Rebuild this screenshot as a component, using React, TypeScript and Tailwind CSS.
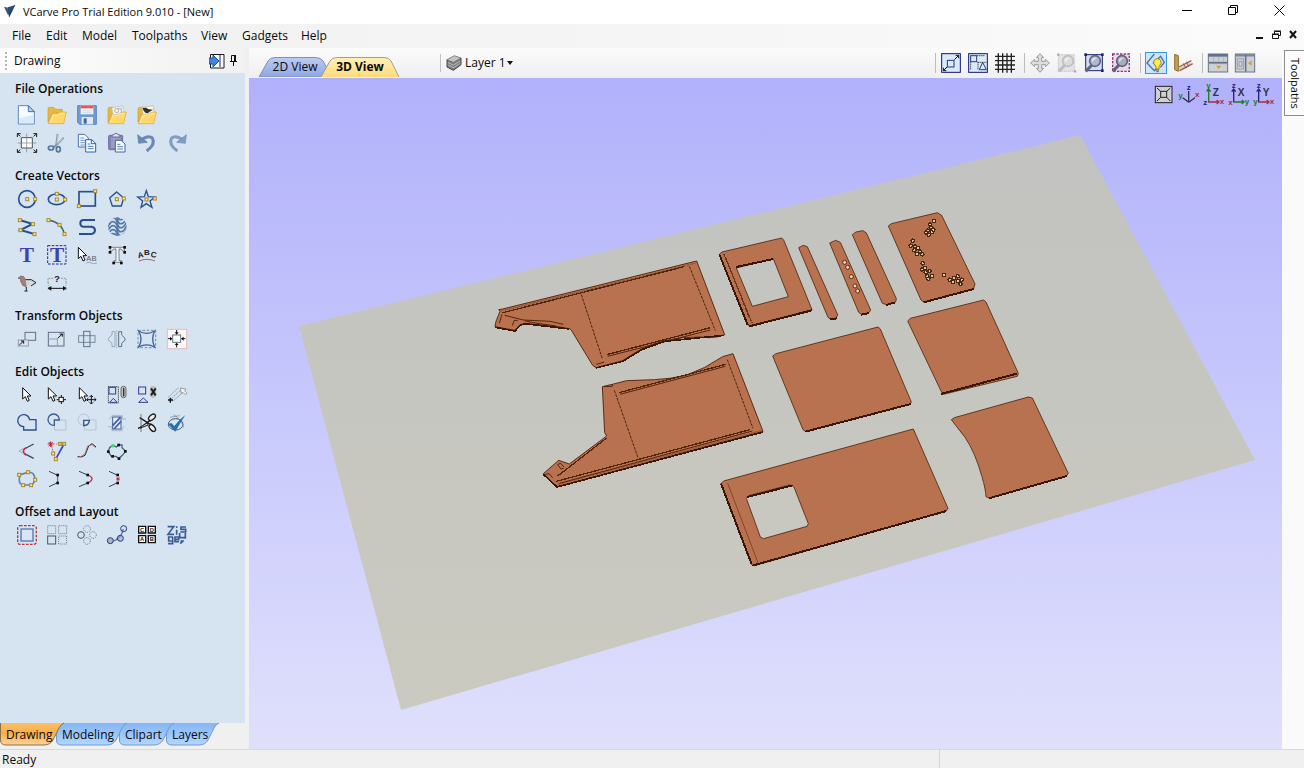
import React from "react";

type IconProps = { children: React.ReactNode; className?: string };

/* Tool glyphs are drawn on a 60-unit grid, three units to a pixel. */
function Glyph({ children, className = "size-5" }: IconProps) {
  return (
    <svg viewBox="0 0 60 60" className={className + " shrink-0 overflow-visible"} fill="none" strokeWidth="3" aria-hidden="true">
      {children}
    </svg>
  );
}

function Node({ x, y, fill = "#ffe88a" }: { x: number; y: number; fill?: string }) {
  return <rect x={x - 4} y={y - 4} width="9" height="9" fill={fill} stroke="#a8882c" strokeWidth="3" />;
}

function Dots({ points, size = 6, fill = "#111" }: { points: number[][]; size?: number; fill?: string }) {
  return (
    <>
      {points.map(([x, y]) => (
        <rect key={x + "-" + y} x={x - size / 2} y={y - size / 2} width={size} height={size} fill={fill} />
      ))}
    </>
  );
}

const navy = "#2a4f8f";
const slate = "#5d7088";
const cursor = "M0 0V34L8 27L14 41L20 38L14 25H25Z";

const folder = (
  <>
    <path d="M3 12Q3 7 8 7H20L26 13H46V24H16L3 52Z" fill="#e9b93f" stroke="#cf9a2b" strokeWidth="2" />
    <path d="M4 56L16 26H32L38 21H58L50 56Z" fill="#ffd869" stroke="#dba637" strokeWidth="2" />
    <path d="M10 52L18 31H34L40 26H52" stroke="#ffecab" strokeWidth="3" />
  </>
);

const icons: Record<string, React.ReactNode> = {
  new: (
    <>
      <path d="M4 2H34L52 20V57H4Z" fill="#f7fbff" stroke="#5b8bc0" />
      <path d="M7 40L49 30V55H7Z" fill="#d8eafa" />
      <path d="M34 2V20H52Z" fill="#b7d2ee" stroke="#3f74b0" />
    </>
  ),
  open: folder,
  save: (
    <>
      <path d="M2 2H58V58H8L2 52Z" fill="#6f9bd0" stroke="#5a86bd" />
      <rect x="11" y="2" width="38" height="26" fill="#eef1f6" />
      <rect x="11" y="2" width="38" height="8" fill="#e8585c" />
      <rect x="14" y="36" width="34" height="22" fill="#dfe8f3" />
      <rect x="20" y="40" width="9" height="16" fill="#3f69a0" />
      <path d="M16 17H44M16 23H44" stroke="#c9d1dc" strokeWidth="2" />
    </>
  ),
  openVector: (
    <>
      {folder}
      <path d="M14 8L47 3L51 20L38 24L32 29H18Z" fill="#f4f4ef" stroke="#b9b9a5" strokeWidth="2" />
      <circle cx="29" cy="17" r="6" stroke="#8b9199" strokeWidth="2" />
      <path d="M31 11H43V22" stroke="#8b9199" strokeWidth="2" />
    </>
  ),
  openBird: (
    <>
      {folder}
      <path d="M14 7L49 2L52 20L38 24L32 29H18Z" fill="#f4f4ef" stroke="#c5b36b" strokeWidth="2" />
      <path d="M16 9L27 8L35 13L48 14L38 20L32 25L26 24L20 17Z" fill="#30322e" />
      <path d="M18 31L9 52" stroke="#fff1bb" />
    </>
  ),
  jobSetup: (
    <>
      <rect x="13" y="14" width="33" height="31" fill="#fff" />
      <path d="M13 14H46V45H13Z" stroke="#4b5157" />
      <path d="M29 2V58M2 30H58" stroke="#777d84" strokeWidth="2" />
      <path d="M1 12V2H11M1 2L10 10M49 2H59V12M59 2L50 10M1 48V58H11M1 58L10 50M49 58H59V48M59 58L50 50" stroke="#181818" />
    </>
  ),
  cut: (
    <>
      <path d="M32 3L28 34L24 42M50 14L31 34L17 44" stroke="#8d97a3" strokeWidth="6" />
      <path d="M33 5L30 32M48 16L32 32" stroke="#e4e9ee" strokeWidth="2" />
      <ellipse cx="12" cy="45" rx="8" ry="6" stroke="#5374a6" strokeWidth="5" />
      <ellipse cx="34" cy="49" rx="6" ry="8" stroke="#5374a6" strokeWidth="5" />
    </>
  ),
  copy: (
    <>
      <path d="M4 4H23L34 15V42H4Z" fill="#f7fbff" stroke="#466fa9" />
      <path d="M10 15H22M10 22H28M10 29H28M10 36H24" stroke="#6c98cf" />
      <path d="M26 20H44L56 31V57H26Z" fill="#f7fbff" stroke="#34629f" />
      <path d="M43 20V32H56" stroke="#34629f" />
      <path d="M32 33H40M32 40H50M32 47H50" stroke="#4d82c4" />
    </>
  ),
  paste: (
    <>
      <rect x="5" y="7" width="42" height="43" rx="3" fill="#8383b6" stroke="#6c6ca4" />
      <rect x="12" y="12" width="28" height="33" fill="#9b9bc9" />
      <path d="M15 12V6H20Q22 1 27 1T34 6H39V12Z" fill="#e4e2ee" stroke="#6a6a94" />
      <path d="M25 22H42L54 33V57H25Z" fill="#f5faff" stroke="#44699e" />
      <path d="M31 34H40M31 41H48M31 48H48" stroke="#5682b8" />
    </>
  ),
  undo: (
    <>
      <path d="M14 20Q34 5 46 15Q57 34 29 54" stroke="#6c88b6" strokeWidth="9" />
      <path d="M2 5L5 31L31 28Z" fill="#6c88b6" stroke="#5f7ba6" strokeWidth="2" />
    </>
  ),
  redo: (
    <g transform="translate(60 0) scale(-1 1)">
      <path d="M14 20Q34 5 46 15Q57 34 29 54" stroke="#819bc1" strokeWidth="9" />
      <path d="M2 5L5 31L31 28Z" fill="#819bc1" stroke="#6f8ab2" strokeWidth="2" />
    </g>
  ),
  circle: (
    <>
      <circle cx="30" cy="30" r="25" stroke={navy} strokeWidth="5" />
      <Node x={30} y={30} /><Node x={54} y={30} />
    </>
  ),
  ellipse: (
    <>
      <ellipse cx="29" cy="31" rx="25" ry="16" stroke={navy} strokeWidth="5" />
      <Node x={29} y={14} /><Node x={29} y={31} /><Node x={54} y={31} />
    </>
  ),
  rectangle: (
    <>
      <rect x="6" y="8" width="49" height="43" stroke={navy} strokeWidth="5" />
      <Node x={54} y={6} /><Node x={5} y={51} />
    </>
  ),
  polygon: (
    <>
      <path d="M29 9L50 27L43 51H16L8 27Z" stroke={navy} strokeWidth="4" />
      <Node x={29} y={30} /><Node x={50} y={28} />
    </>
  ),
  star: (
    <>
      <path d="M28 5L34 23L54 24L39 36L45 55L28 44L12 55L17 36L2 24L22 23Z" stroke={navy} strokeWidth="4" />
      <Node x={28} y={31} /><Node x={53} y={28} />
    </>
  ),
  polyline: (
    <>
      <path d="M8 9L47 21L10 39L52 51" stroke={navy} strokeWidth="6" />
      <Node x={8} y={9} /><Node x={47} y={21} /><Node x={10} y={39} /><Node x={52} y={51} />
    </>
  ),
  arc: (
    <>
      <path d="M4 9Q45 16 52 51" stroke="#49627d" strokeWidth="4" />
      <Node x={4} y={9} /><Node x={37} y={23} /><Node x={52} y={51} />
    </>
  ),
  curve: <path d="M54 9H18Q10 10 10 19T18 29H44Q54 31 54 40T44 51H6" stroke={navy} strokeWidth="6" />,
  texture: (
    <>
      <clipPath id="texture-disc"><circle cx="31" cy="29" r="28" /></clipPath>
      <g clipPath="url(#texture-disc)" stroke="#5478a6" strokeWidth="5">
        {[-36, -24, -12, 0, 12, 24, 36].map((dy) => (
          <path key={dy} transform={`translate(0 ${dy})`} d="M-4 44Q8 14 18 14T31 30T44 44T66 12" />
        ))}
      </g>
    </>
  ),
  text: <text x="8" y="50" fontFamily="Liberation Serif, serif" fontWeight="700" fontSize="64" fill="#3c43a5">T</text>,
  textBox: (
    <>
      <rect x="2" y="2" width="55" height="55" stroke="#22268c" strokeDasharray="8 4" />
      <text x="9" y="50" fontFamily="Liberation Serif, serif" fontWeight="700" fontSize="64" fill="#3c43a5">T</text>
    </>
  ),
  textSelect: (
    <>
      <path d={cursor} transform="translate(4 7)" fill="#fff" stroke="#111" />
      <text x="28" y="49" fontFamily="Liberation Sans, sans-serif" fontSize="23" fill="#4e5d70">AB</text>
      <path d="M28 54Q38 50 43 54T60 54" stroke="#6b86a9" strokeWidth="2" />
    </>
  ),
  textEdit: (
    <>
      <path d="M10 7H52V18H47L43 12H36V47H43V52H21V47H27V12H19L15 18H10Z" fill="#f4f7fa" stroke="#4a4f55" strokeWidth="2" />
      <Dots points={[[9, 7], [53, 7], [9, 22], [53, 22], [20, 54], [43, 54]]} size={8} />
    </>
  ),
  textCurve: (
    <>
      <g fontFamily="Liberation Sans, sans-serif" fontWeight="700" fontSize="24" fill="#222">
        <text x="2" y="39" transform="rotate(-12 8 30)">A</text>
        <text x="21" y="30">B</text>
        <text x="41" y="37" transform="rotate(12 48 30)">C</text>
      </g>
      <path d="M6 48Q30 38 54 48" stroke="#a06a78" />
    </>
  ),
  bird: (
    <>
      <path d="M3 16L11 9L20 11L27 22L39 29L26 41L17 37L11 25V17Z" fill="#a97e77" stroke="#65514f" strokeWidth="2" />
      <path d="M26 20L43 20L57 29L42 39L29 41Z" fill="#d4d7db" />
      <path d="M26 20L43 20L57 29L42 39M28 42V54M22 54H32" stroke="#222" />
    </>
  ),
  dimension: (
    <>
      <path d="M3 30V16H18M42 16H57V30" stroke="#898f96" strokeDasharray="5 3" />
      <text x="21" y="27" fontFamily="Liberation Sans, sans-serif" fontWeight="700" fontSize="29" fill="#222">?</text>
      <path d="M4 30V54M57 30V54" stroke="#9ba1a8" strokeDasharray="3 3" />
      <path d="M5 46H56" stroke="#111" />
      <path d="M2 46L13 39V53ZM59 46L48 39V53Z" fill="#111" />
    </>
  ),
  move: (
    <>
      <rect x="24" y="10" width="32" height="24" stroke={slate} />
      <rect x="4" y="33" width="30" height="18" fill="#dce5ef" stroke="#8d9bac" />
      <path d="M7 48L20 36M12 36H20V44" stroke="#161616" />
    </>
  ),
  scale: (
    <>
      <rect x="4" y="10" width="47" height="41" stroke={slate} />
      <path d="M4 30H31V51" stroke="#91a0b2" />
      <path d="M32 28L46 15M38 15H46V23" stroke="#161616" />
    </>
  ),
  rotate: (
    <>
      <rect x="5" y="20" width="49" height="20" stroke="#7a8a9f" />
      <rect x="20" y="7" width="19" height="46" stroke={slate} />
    </>
  ),
  mirror: (
    <>
      <path d="M24 8V53H15V43L4 34V28L15 18V8Z" stroke="#9aa9bb" />
      <path d="M35 8V53H44V43L54 34V28L44 18V8Z" stroke={slate} />
      <path d="M29 4V57" stroke="#8193a8" strokeWidth="2" strokeDasharray="4 3" />
    </>
  ),
  distort: (
    <>
      <path d="M3 4H56V56H3Z" stroke="#4b6078" strokeDasharray="8 5" strokeWidth="2" />
      <path d="M5 6Q29 20 53 6Q41 30 53 54Q29 41 5 54Q19 30 5 6Z" stroke="#3c639c" strokeWidth="4" />
    </>
  ),
  align: (
    <>
      <rect x="1" y="1" width="58" height="58" fill="#fff7f7" stroke="#dfbcc0" />
      <rect x="17" y="18" width="24" height="22" fill="#fff" stroke="#5b7a79" />
      <path d="M29 3V14M29 55V44M3 29H14M55 29H44" stroke="#111" />
      <path d="M29 17L23 10H35ZM29 41L23 48H35ZM16 29L9 23V35ZM42 29L50 23V35Z" fill="#111" />
    </>
  ),
  select: <path d={cursor} transform="translate(17 8)" fill="#fff" stroke="#111" />,
  nodeEdit: (
    <>
      <path d={cursor} transform="translate(4 8)" fill="#fff" stroke="#111" />
      <rect x="36" y="37" width="13" height="13" fill="#fff" stroke="#111" />
      <path d="M43 30V36M43 51V57M29 44H35M50 44H57" stroke="#111" />
    </>
  ),
  transformEdit: (
    <>
      <path d={cursor} transform="translate(7 8)" fill="#fff" stroke="#111" />
      <path d="M43 31V57M29 44H57M38 36L43 31L48 36M38 52L43 57L48 52M34 39L29 44L34 49M52 39L57 44L52 49" stroke="#111" strokeWidth="3" />
    </>
  ),
  group: (
    <>
      <path d="M4 5H34V54H4Z" stroke="#222" strokeDasharray="3 3" />
      <rect x="6" y="7" width="20" height="20" stroke="#31379c" />
      <path d="M8 52L19 40L30 52Z" fill="#dfe5f2" stroke="#31379c" />
      <rect x="42" y="4" width="15" height="34" rx="7" fill="#bfc0bd" stroke="#6c6c69" />
      <rect x="48" y="9" width="4" height="25" fill="#333" />
    </>
  ),
  ungroup: (
    <>
      <rect x="5" y="6" width="21" height="21" stroke="#31379c" />
      <path d="M5 52L19 39L33 52Z" fill="#dfe5f2" stroke="#31379c" />
      <rect x="39" y="3" width="19" height="35" rx="7" fill="#c1c1bd" />
      <path d="M42 10L56 31M56 10L42 31" stroke="#222" strokeWidth="6" />
    </>
  ),
  measure: (
    <>
      <path d="M3 38L34 8M17 49L48 22" stroke="#8595a8" strokeWidth="2" />
      <path d="M11 43L43 13" stroke="#35569b" strokeWidth="2" strokeDasharray="4 3" />
      <path d="M3 45H18M10 38V53" stroke="#111" strokeWidth="4" />
      <path d="M40 9L57 12L53 17L60 25L55 29L48 22L43 26Z" fill="#f2f2ef" stroke="#777" strokeWidth="2" />
    </>
  ),
  weld: <path d="M38 20H57V51H20V41A18 18 0 1 1 38 20Z" stroke={navy} strokeWidth="4" />,
  subtract: (
    <>
      <path d="M37 21H57V51H22V37" stroke="#b3c0ce" />
      <path d="M37 21H22V37A17 17 0 1 1 37 21Z" stroke="#3b5d8c" strokeWidth="4" />
    </>
  ),
  intersect: (
    <>
      <path d="M37 21A17 17 0 1 0 22 37V51H57V21Z" stroke="#b8c5d2" />
      <path d="M20 22H37Q36 37 20 38Z" stroke="#355785" strokeWidth="4" />
    </>
  ),
  trim: (
    <>
      <path d="M6 18L15 10V7H39M51 40L45 48V53H22M3 41H15V53H21M40 8H46V18H57" stroke="#a9b6c4" />
      <rect x="17" y="12" width="25" height="36" fill="#e7eef7" stroke="#3f5fa0" />
      <path d="M17 38L40 13M21 48L42 25" stroke="#3f5fa0" strokeWidth="5" />
    </>
  ),
  scissors: (
    <>
      <path d="M8 14L36 32L44 34M10 46L34 26L44 20" stroke="#1a1a1a" strokeWidth="4" />
      <path d="M12 3V57" stroke="#444" strokeWidth="2" />
      <ellipse cx="45" cy="13" rx="12" ry="7" transform="rotate(-42 45 13)" fill="#eee" stroke="#1a1a1a" strokeWidth="4" />
      <ellipse cx="46" cy="45" rx="12" ry="7" transform="rotate(50 46 45)" fill="#eee" stroke="#1a1a1a" strokeWidth="4" />
      <path d="M3 46L30 30L34 36L12 44Z" fill="#ddd" stroke="#1a1a1a" />
    </>
  ),
  validate: (
    <>
      <ellipse cx="26" cy="34" rx="22" ry="17" stroke="#40566d" />
      <path d="M20 5Q44 20 50 44M9 13L38 8" stroke="#71818f" strokeWidth="2" />
      <path d="M3 33L13 30L22 39Q36 20 55 6Q38 33 25 56Z" fill="#2870ae" />
    </>
  ),
  fillet: (
    <>
      <path d="M50 9L22 24M22 38L50 52" stroke="#344b68" strokeWidth="4" />
      <path d="M27 20Q11 30 27 42" stroke="#b13344" strokeWidth="5" />
      <path d="M21 21L6 30L22 39" stroke="#aaa4ba" />
    </>
  ),
  bezier: (
    <>
      <path d="M11 8L26 55" stroke="#d55353" strokeDasharray="5 3" />
      <path d="M51 9L27 53" stroke="#3c45ad" strokeWidth="5" />
      <path d="M11 1V18M2 9H20M5 3L17 16M17 3L5 16" stroke="#bd2530" />
      <path d="M20 9H51" stroke="#d77575" strokeDasharray="4 3" />
      <Node x={39} y={8} fill="#c6dd68" /><Node x={51} y={8} fill="#c6dd68" /><Node x={18} y={37} /><Node x={26} y={54} />
    </>
  ),
  fit: (
    <>
      <path d="M2 46L13 48L24 43L35 15L45 8L57 18" stroke="#222" />
      <path d="M2 49L16 45L25 36L32 15L46 11L55 20" stroke="#b46670" strokeWidth="3" />
    </>
  ),
  smooth: (
    <>
      <path d="M4 32L8 19L18 13L28 18L35 12H45V20L56 31L46 43L36 52L26 46L13 46Z" stroke="#476187" strokeWidth="4" />
      <Dots size={8} points={[[4, 32], [17, 46], [36, 53], [55, 31], [35, 12]]} />
      <rect x="13" y="10" width="9" height="9" fill="#42de6b" />
    </>
  ),
  closeCurve: (
    <>
      <path d="M9 17L34 10Q53 8 54 32Q50 47 39 48H16Q2 43 9 17Z" stroke="#6385b4" strokeWidth="5" />
      <Node x={6} y={17} /><Node x={33} y={9} /><Node x={54} y={32} /><Node x={42} y={48} /><Node x={18} y={48} />
    </>
  ),
  joinLine: (
    <>
      <path d="M6 7L30 18M30 42L6 53" stroke="#344456" />
      <path d="M32 18V42" stroke="#c03444" />
      <Dots size={8} points={[[32, 18], [32, 42]]} />
    </>
  ),
  joinCurve: (
    <>
      <path d="M6 7L32 18M32 42L6 53" stroke="#344456" />
      <path d="M33 18Q57 28 33 42" stroke="#c03444" strokeWidth="4" />
      <Dots size={8} points={[[32, 18], [32, 42]]} />
    </>
  ),
  joinPoint: (
    <>
      <path d="M6 7L30 18M30 42L6 53" stroke="#344456" />
      <Dots size={8} points={[[32, 18], [32, 42]]} />
      <Dots size={9} fill="#c4303d" points={[[33, 30]]} />
    </>
  ),
  offset: (
    <>
      <rect x="2" y="2" width="56" height="56" rx="7" stroke="#b23644" strokeWidth="4" strokeDasharray="8 4" />
      <rect x="12" y="12" width="36" height="36" fill="#d7e5f5" stroke="#5279b4" strokeWidth="4" />
    </>
  ),
  array: (
    <>
      <rect x="2" y="33" width="24" height="24" stroke="#42566d" />
      <path d="M2 2H26V26H2ZM35 2H59V26H35ZM35 33H59V57H35Z" stroke="#6a7988" strokeDasharray="3 3" />
    </>
  ),
  circularArray: (
    <>
      <circle cx="12" cy="30" r="10" stroke="#42566d" />
      <g stroke="#677887" strokeDasharray="3 3">
        <circle cx="48" cy="30" r="10" /><circle cx="30" cy="12" r="10" /><circle cx="30" cy="48" r="10" />
      </g>
    </>
  ),
  copyAlong: (
    <>
      <path d="M10 48Q40 49 49 12" stroke="#7278c6" strokeWidth="4" />
      <circle cx="10" cy="47" r="9" fill="#a9b3cc" stroke="#263d6b" />
      <circle cx="40" cy="40" r="9" fill="#9fa9d6" fillOpacity="0.6" stroke="#263d6b" />
      <circle cx="50" cy="11" r="9" stroke="#263d6b" />
    </>
  ),
  nest: (
    <>
      <path d="M5 4H26V24H5ZM34 4H55V24H34ZM5 32H26V53H5ZM34 32H55V53H34Z" fill="#fff" stroke="#111" strokeWidth="4" />
      <g fontFamily="Liberation Sans, sans-serif" fontWeight="700" fontSize="17" fill="#111">
        <text x="9" y="20">C</text><text x="38" y="20">D</text><text x="9" y="49">A</text><text x="38" y="49">B</text>
      </g>
    </>
  ),
  nestZig: (
    <g stroke="#385c96" strokeWidth="5">
      <path d="M2 5H20L3 28H21M29 14V29M29 4V9M57 6H42V13H56V21H40M38 24V38H54M55 24V41" />
      <path d="M18 36H5V48H17V36V56H3M43 46V51M36 50H24V36H35V43H26M40 56L50 46" />
    </g>
  ),
};

const groups: { title: string; rows: [string, string][][] }[] = [
  {
    title: "File Operations",
    rows: [
      [["new", "New file"], ["open", "Open file"], ["save", "Save file"], ["openVector", "Import vectors"], ["openBird", "Import bitmap"]],
      [["jobSetup", "Job setup"], ["cut", "Cut"], ["copy", "Copy"], ["paste", "Paste"], ["undo", "Undo"], ["redo", "Redo"]],
    ],
  },
  {
    title: "Create Vectors",
    rows: [
      [["circle", "Draw circle"], ["ellipse", "Draw ellipse"], ["rectangle", "Draw rectangle"], ["polygon", "Draw polygon"], ["star", "Draw star"]],
      [["polyline", "Draw polyline"], ["arc", "Draw arc"], ["curve", "Draw curve"], ["texture", "Vector texture"]],
      [["text", "Draw text"], ["textBox", "Draw text in box"], ["textSelect", "Edit text"], ["textEdit", "Convert text"], ["textCurve", "Text on curve"]],
      [["bird", "Trace bitmap"], ["dimension", "Dimension"]],
    ],
  },
  {
    title: "Transform Objects",
    rows: [[["move", "Move"], ["scale", "Set size"], ["rotate", "Rotate"], ["mirror", "Mirror"], ["distort", "Distort"], ["align", "Align"]]],
  },
  {
    title: "Edit Objects",
    rows: [
      [["select", "Select"], ["nodeEdit", "Node editing"], ["transformEdit", "Transform"], ["group", "Group"], ["ungroup", "Ungroup"], ["measure", "Measure"]],
      [["weld", "Weld"], ["subtract", "Subtract"], ["intersect", "Intersect"], ["trim", "Trim"], ["scissors", "Interactive trim"], ["validate", "Validate vectors"]],
      [["fillet", "Fillet"], ["bezier", "Extend"], ["fit", "Fit curves"], ["smooth", "Smooth"]],
      [["closeCurve", "Join vectors"], ["joinLine", "Close with line"], ["joinCurve", "Close with curve"], ["joinPoint", "Close by moving ends"]],
    ],
  },
  {
    title: "Offset and Layout",
    rows: [[["offset", "Offset"], ["array", "Array copy"], ["circularArray", "Circular copy"], ["copyAlong", "Copy along vectors"], ["nest", "Nest parts"], ["nestZig", "Plate layout"]]],
  },
];

function ToolPanel() {
  return (
    <div className="flex grow flex-col gap-[10px] bg-[#d6e4f1] pt-[7px] pl-3">
      {groups.map((g, i) => (
        <section key={g.title}>
          <h2 className={"ml-[3px] text-[12px] leading-[18px] font-semibold " + (i === 0 ? "mb-[3px]" : "")}>{g.title}</h2>
          {g.rows.map((row, r) => (
            <div key={r} className="flex">
              {row.map(([id, label]) => (
                <button key={id} type="button" aria-label={label} className="flex h-7 w-[30px] items-center justify-center">
                  <Glyph>{icons[id]}</Glyph>
                </button>
              ))}
            </div>
          ))}
        </section>
      ))}
    </div>
  );
}

const bottomTabs = [
  { label: "Drawing", box: "z-40 w-16 pl-[6px]", w: 64, active: true },
  { label: "Modeling", box: "z-30 -ml-2 w-[71px] pl-[6px]", w: 71, active: false },
  { label: "Clipart", box: "z-20 -ml-2 w-[55px] pl-[6px]", w: 55, active: false },
  { label: "Layers", box: "z-10 -ml-2 w-[53px] pl-[6px]", w: 53, active: false },
];

function BottomTabs() {
  return (
    <div role="tablist" className="flex h-[26px]">
      {bottomTabs.map(({ label, box, w, active }) => {
        const fill = active ? "url(#tab-on)" : "url(#tab-off)";
        return (
          <button key={label} type="button" role="tab" aria-selected={active} className={"relative grid h-[23px] items-center " + box}>
            <svg className="-ml-[6px] h-[23px] overflow-visible [grid-area:1/1]" width={w} height="23" aria-hidden="true">
              <defs>
                <linearGradient id="tab-on" x2="0" y2="1"><stop stopColor="#fbc163" /><stop offset="0.45" stopColor="#f9ae4b" /><stop offset="1" stopColor="#fdd39a" /></linearGradient>
                <linearGradient id="tab-off" x2="0" y2="1"><stop stopColor="#84b5f5" /><stop offset="1" stopColor="#b3d6ff" /></linearGradient>
              </defs>
              <path d={`M0.5 0V17Q0.5 22 6 22H${w - 20}Q${w - 14} 22 ${w - 11} 17L${w - 5} 5Q${w - 3} 1 ${w} 0`} fill={fill} stroke={active ? "#8d7146" : "#6e9ad0"} />
            </svg>
            <span className="text-left text-[12px] leading-4 whitespace-nowrap [grid-area:1/1]">{label}</span>
          </button>
        );
      })}
    </div>
  );
}

function Sidebar() {
  return (
    <aside className="flex w-[245px] shrink-0 flex-col">
      <div className="flex h-[25px] items-center bg-gradient-to-r from-[#fdfdfd] to-[#f1f1f1] pr-[7px] pl-[5px]">
        <span className="h-[18px] border-l-2 border-dotted border-[#b5b5b5]" />
        <span className="ml-[7px] grow text-[12px] leading-4">Drawing</span>
        <button type="button" aria-label="Dock panel">
          <svg width="16" height="16" viewBox="0 0 16 16" aria-hidden="true">
            <path d="M1.500 1.500H15V15H1.500Z" fill="#fff" stroke="#1a1a1a" />
            <path d="M11 2V14.500" stroke="#8a8ac5" strokeWidth="2" />
            <path d="M0 5H4V2L10 8L4 14V11H0Z" fill="#3f86e0" stroke="#1c4e9c" />
          </svg>
        </button>
        <button type="button" aria-label="Pin panel" className="mb-[2px] ml-1">
          <svg width="9" height="12" viewBox="0 0 9 12" stroke="#111" fill="none" aria-hidden="true">
            <path d="M2.500 7V1.500H6.500V7M1 7.500H8M4.500 8V12" /><path d="M6 1V7" strokeWidth="2" />
          </svg>
        </button>
      </div>
      <ToolPanel />
      <BottomTabs />
    </aside>
  );
}

const lens = (frame: React.ReactNode, tone: string, shade: string) => (
  <>
    {frame}
    <path d="M24 36L5 55" stroke={shade} strokeWidth="9" />
    <circle cx="33" cy="24" r="16" fill={tone} stroke={shade} strokeWidth="5" />
    <path d="M23 20Q28 11 40 15Q31 18 25 28Z" fill="#fff" fillOpacity="0.6" />
  </>
);

const viewIcons: Record<string, React.ReactNode> = {
  zoomFit: (
    <>
      <rect x="2" y="2" width="56" height="56" fill="#d9eafa" stroke="#14147a" />
      <rect x="19" y="22" width="20" height="20" stroke="#233c7c" />
      <path d="M40 20L53 7M44 7H53V16M18 42L7 53M7 44V53H16" stroke="#111" />
    </>
  ),
  zoomParts: (
    <>
      <rect x="2" y="2" width="56" height="56" fill="#d9eafa" stroke="#14147a" />
      <rect x="8" y="8" width="18" height="18" stroke="#233c7c" />
      <path d="M34 50L44 28L55 50Z" stroke="#233c7c" />
      <path d="M28 8H52M8 28V52M29 28H55M30 28V52" stroke="#111" strokeDasharray="3 3" />
    </>
  ),
  grid: <path d="M10 1V59M23 1V59M36 1V59M49 1V59M0 10H60M0 23H60M0 36H60M0 49H60" stroke="#222" strokeWidth="4" />,
  pan: <path d="M30 2L41 14H35V25H46V19L58 30L46 41V35H35V46H41L30 58L19 46H25V35H14V41L2 30L14 19V25H25V14H19Z" fill="#ddd" stroke="#999" />,
  zoomOff: lens(<><path d="M4 5H52V55H4Z" fill="#e3e3e3" stroke="#c9c9c9" strokeDasharray="4 2" /><Dots size={7} fill="#aaa" points={[[4, 5], [54, 55]]} /></>, "#dcdcdc", "#bdbdbd"),
  zoomBox: lens(<><rect x="5" y="5" width="50" height="48" fill="#d5dcec" stroke="#1e2268" strokeWidth="3" /><Dots size={8} fill="#1e2268" points={[[5, 5], [55, 5], [55, 53]]} /></>, "#aebac8", "#5f6684"),
  zoomSel: lens(<rect x="5" y="3" width="50" height="52" fill="#ead9ea" stroke="#8a337c" strokeWidth="4" strokeDasharray="7 4" />, "#a3afbd", "#5f6279"),
  bulb: (
    <>
      <path d="M25 3L3 30L25 53L34 43L22 30L44 10L55 28L43 43" stroke="#536da3" strokeWidth="4" />
      <path d="M30 48V40Q19 31 24 22Q34 12 44 22Q49 32 39 40V48Z" fill="#ffea57" stroke="#a18716" />
      <path d="M29 51H40M31 56H38" stroke="#555" />
    </>
  ),
  brush: (
    <>
      <path d="M17 44L52 27L56 36L18 56Z" fill="#e3d3bd" />
      <path d="M5 4L16 8V55L5 50Z" fill="#c5a04d" stroke="#8d7033" />
      <path d="M18 42L55 23M20 53L59 32" stroke="#a85a4e" strokeWidth="4" />
      <path d="M31 31L39 46M40 26L47 41" stroke="#555" strokeWidth="2" />
    </>
  ),
  splitH: (
    <>
      <rect x="1" y="3" width="58" height="54" fill="#cdd0d5" stroke="#697384" />
      <rect x="1" y="3" width="58" height="8" fill="#64718d" />
      <path d="M1 32H59M17 12V26M32 12V26M47 12V26" stroke="#a0a7b0" strokeWidth="2" />
      <path d="M2 29H58" stroke="#64718d" strokeWidth="5" />
      <path d="M24 38H40L32 48Z" fill="#cda33c" />
    </>
  ),
  splitV: (
    <>
      <rect x="1" y="3" width="58" height="54" fill="#cdd0d5" stroke="#697384" />
      <path d="M1 7H59" stroke="#7b869a" strokeWidth="7" />
      <path d="M32 5V56" stroke="#68748c" strokeWidth="5" />
      <path d="M7 17H25V48H7ZM12 25H21V40H12Z" stroke="#828b98" strokeWidth="2" />
      <path d="M50 22V38L39 30Z" fill="#cda33c" />
    </>
  ),
};

const toolGroups: [string, string, boolean][][] = [
  [["zoomFit", "Zoom to fit", false], ["zoomParts", "Zoom to drawing", false], ["grid", "Toggle grid", false]],
  [["pan", "Pan", false], ["zoomOff", "Zoom", false], ["zoomBox", "Zoom to box", false], ["zoomSel", "Zoom to selected", false]],
  [["bulb", "Multi-sided view", true], ["brush", "Machining marks", false]],
  [["splitH", "Tile horizontally", false], ["splitV", "Tile vertically", false]],
];

function Toolbar() {
  return (
    <div className="flex h-[30px] shrink-0 items-center bg-gradient-to-b from-[#fbfbfb] to-[#efefef] pl-[9px]">
      <div role="tablist" className="flex self-end">
        <button type="button" role="tab" aria-selected="false" className="grid h-[22px] w-[70px] items-center justify-items-center">
          <svg width="70" height="20" className="[grid-area:1/1]" aria-hidden="true">
            <defs>
              <linearGradient id="tab-2d" x2="0" y2="1"><stop stopColor="#bccbf3" /><stop offset="1" stopColor="#8da6e3" /></linearGradient>
              <linearGradient id="tab-3d" x2="0" y2="1"><stop stopColor="#fff0b8" /><stop offset="1" stopColor="#fddb7c" /></linearGradient>
            </defs>
            <path d="M1 20L10 4Q12 0.5 17 0.500H57Q63 0.500 65 4L70 13V20Z" fill="url(#tab-2d)" stroke="#8790a6" />
          </svg>
          <span className="ml-1 text-[12px] leading-4 [grid-area:1/1]">2D View</span>
        </button>
        <button type="button" role="tab" aria-selected="true" className="z-10 -ml-[7px] grid h-[22px] w-20 items-center justify-items-center">
          <svg width="80" height="20" className="[grid-area:1/1]" aria-hidden="true">
            <path d="M0 20L9 4Q11 0.500 16 0.500H63Q68 0.500 70 4L78 20" fill="url(#tab-3d)" stroke="#a79d83" />
          </svg>
          <span className="-ml-[2px] text-[12px] leading-4 font-bold [grid-area:1/1]">3D View</span>
        </button>
      </div>
      <div className="ml-[39px] h-[18px] border-l border-[#c2c2c2]" />
      <button type="button" className="ml-[5px] flex items-center">
        <svg width="16" height="16" viewBox="0 0 48 48" aria-hidden="true">
          <path d="M3 14L25 2L45 9V29L22 46L3 36Z" fill="#7d7d7d" />
          <path d="M3 14L25 2L45 9L22 22Z" fill="#c4c4c4" stroke="#6a6a6a" strokeWidth="2" />
          <path d="M4 22L22 30L44 17M4 29L22 38L44 24" stroke="#d9d9d9" strokeWidth="2" fill="none" />
          <path d="M3 14V36L22 46L45 29V9" stroke="#444" strokeWidth="3" fill="none" />
        </svg>
        <span className="ml-[3px] text-[12px] leading-4">Layer 1</span>
        <svg width="6" height="4" viewBox="0 0 6 4" className="ml-px" aria-hidden="true"><path d="M0 0H6L3 4Z" fill="#111" /></svg>
      </button>
      <div className="ml-auto flex pr-6">
        {toolGroups.map((group, i) => (
          <div key={i} className="flex items-center border-l border-[#bcbcbc] pl-[1px] not-last:mr-[6px]">
            {group.map(([id, label, on]) => (
              <button key={id} type="button" aria-label={label} aria-pressed={on} className="flex h-5 w-[27px] items-center justify-center">
                <span className={on ? "border border-[#3c98dd] bg-[#cbe6fb]" : ""}>
                  <Glyph>{viewIcons[id]}</Glyph>
                </span>
              </button>
            ))}
          </div>
        ))}
      </div>
    </div>
  );
}

const axis = (letters: [string, number, number, string][], lines: React.ReactNode, big?: string) => (
  <>
    {lines}
    {letters.map(([t, x, y, c]) => (
      <text key={t} x={x} y={y} fontFamily="Liberation Sans, sans-serif" fontWeight="700" fontSize="24" fill={c}>{t}</text>
    ))}
    {big && <text x="26" y="34" fontFamily="Liberation Sans, sans-serif" fontWeight="700" fontSize="30" fill="#2f3048">{big}</text>}
  </>
);

const green = "#1e7a2c";
const red = "#a52d45";
const blue = "#23237d";

const corner = (v: string, h: string) => (
  <>
    <path d="M14 52V13M8 20L14 12L20 20" stroke={v} strokeWidth="4" />
    <path d="M13 51H44M38 45L45 51L38 57" stroke={h} strokeWidth="4" />
  </>
);

const viewButtons: [string, React.ReactNode][] = [
  ["Zoom to fit 3D", (
    <>
      <rect x="4" y="4" width="50" height="49" fill="#cfcfd3" stroke="#222" />
      <rect x="20" y="19" width="18" height="18" stroke="#222" />
      <path d="M20 19L9 9M38 19L49 9M20 37L9 48M38 37L49 48" stroke="#222" />
    </>
  )],
  ["Isometric view", axis([["z", 23, 15, blue], ["y", -2, 38, green], ["x", 48, 37, red]], <path d="M29 18V52M29 52L11 38M29 52L48 38M29 36V48" stroke="#303050" strokeWidth="4" />)],
  ["View along Z", axis([["y", 7, 9, green], ["z", -2, 59, blue], ["x", 47, 58, red]], corner(green, red), "Z")],
  ["View along X", axis([["z", 8, 9, blue], ["x", -2, 59, red], ["y", 47, 56, green]], corner(blue, green), "X")],
  ["View along Y", axis([["z", 8, 9, blue], ["y", -2, 56, green], ["x", 47, 58, red]], corner(blue, red), "Y")],
];

const holes = [
  [653, 92], [662, 82], [666, 97], [672, 63], [656, 104], [670, 89], [648, 98], [660, 74],
  [608, 122], [602, 137], [613, 151], [624, 145], [630, 155], [621, 162], [637, 163], [615, 140],
  [638, 190], [636, 209], [647, 217], [659, 213], [652, 229], [666, 229], [655, 236], [645, 204],
  [703, 225], [719, 239], [732, 235], [743, 229], [744, 244], [755, 239], [752, 252], [730, 246],
];

function Scene() {
  return (
    <svg viewBox="249 78 1033 671" preserveAspectRatio="xMidYMid slice" className="size-full [grid-area:1/1]" role="img" aria-label="Cut parts on a sheet">
      <defs>
        <linearGradient id="sheet" x1="0" y1="135" x2="0" y2="710" gradientUnits="userSpaceOnUse">
          <stop stopColor="#c2c3c0" /><stop offset="1" stopColor="#cbcac0" />
        </linearGradient>
      </defs>
      <path d="M299 326L1080 135L1255 460L401 710Z" fill="url(#sheet)" />
      <g strokeLinejoin="round" shapeRendering="crispEdges">
        <g transform="translate(480 240) scale(0.33333)" fill="#b8724f">
          <g stroke="#5a2a14" strokeWidth="3">
            <path d="M60 214L56 209L68 207L650 63L734 284L711 291Q690 295 661 291Q610 290 554 302Q516 312 485 327Q451 346 428 362L348 383L338 376L273 269L268 266L234 260L134 250L118 256L105 271L45 260L48 244Z" />
            <path d="M367 440L401 432L440 422L523 419Q570 417 618 406Q674 387 728 350L759 341L849 574L231 740L190 701L236 661L268 672L380 588L374 578Z" />
          </g>
          <g fill="none" stroke="#9b6040" strokeWidth="4">
            <path d="M64 213L649 69M234 733L843 572" />
          </g>
          <g fill="none" stroke="#54240d" strokeWidth="3">
            <path d="M65 219L612 80M380 344L691 263M417 458L737 373M229 724L810 569M233 708L380 594" strokeWidth="4" />
            <path d="M383 349L691 270M420 463L736 379M238 730L817 573" />
            <path d="M304 164L367 356M628 79L706 272M403 451L474 653M742 359L819 565" strokeDasharray="9 3" />
            <path d="M74 226L130 240L210 244L250 253M66 223L58 250M97 257L103 241L113 242M134 242L160 248L228 258M349 373L373 366M371 440L397 439L398 435M233 674L243 687L251 685M233 673L242 670L252 681M196 703L207 701L218 713" />
          </g>
          <path d="M348 384L428 364L485 329L554 304L661 293L732 286M231 741L849 576M231 741L190 703M45 262L105 273L119 257L134 251L268 267" fill="none" stroke="#3c1708" strokeWidth="5" />
        </g>
        <g transform="translate(710 200) scale(0.33333)">
          <g fill="#b8724f" stroke="#5f3820" strokeWidth="3">
            <path d="M28 163L36 156L215 114L221 120L306 329L118 378L111 371ZM79 204L127 319L235 290L190 176Z" fillRule="evenodd" />
            <path d="M266 143L280 136L292 140L383 344L379 354L361 357L354 352Z" />
            <path d="M359 129L377 121L391 127L482 330L477 338L454 343L446 337Z" />
            <path d="M427 104L438 96L459 92L469 99L559 296L557 306L530 314L517 310Z" />
            <path d="M535 78L544 71L682 38L695 46L795 252L791 266L641 306L633 300Z" />
            <path d="M593 363L601 355L821 300L828 306L925 520L922 529L700 583L694 575Z" />
          </g>
          <path d="M118 379L306 331M79 201L190 177M28 163L113 375M361 358L380 355M454 344L477 339M528 315L556 307M641 307L791 267" fill="none" stroke="#391607" strokeWidth="6" />
          <path d="M42 162L126 369M49 178L117 350" fill="none" stroke="#693719" strokeWidth="4" strokeDasharray="8 3" />
          <g fill="#f0d5bd" stroke="#542916" strokeWidth="3">
            {[[404, 187], [413, 202], [424, 230], [435, 258], [443, 273]].map(([x, y]) => <circle key={y} cx={x} cy={y} r="6" />)}
          </g>
          <g fill="#d8c8a9" stroke="#4b2813" strokeWidth="4">
            {holes.map(([x, y]) => <circle key={x + "," + y} cx={x} cy={y} r="5" />)}
          </g>
        </g>
        <g transform="translate(700 320) scale(0.33333)">
          <g fill="#b8724f" stroke="#5f3820" strokeWidth="3">
            <path d="M218 108L228 101L534 21L541 27L634 246L630 252L316 334L309 329Z" />
            <path d="M754 299L763 293L985 231L997 234L1105 460L1100 467L867 534L858 530Q857 508 846 470Q825 396 795 352Z" />
            <path d="M63 491L71 483L640 327L744 565L739 573L163 737L155 734ZM139 535Q142 529 149 526L269 495Q279 494 283 504L325 611L321 619L191 656L181 651Z" fillRule="evenodd" />
          </g>
          <path d="M316 335L632 252M867 535L1101 468M157 737L739 573M63 491L155 733M142 531L278 496M722 222L950 161" fill="none" stroke="#391607" strokeWidth="6" />
          <path d="M83 490L174 728" fill="none" stroke="#81482a" strokeWidth="3" />
        </g>
      </g>
    </svg>
  );
}

function Viewport() {
  return (
    <div className="grid min-h-0 grow grid-rows-[minmax(0,1fr)] bg-gradient-to-b from-[#b1b1fb] to-[#e0e0fc]">
      <Scene />
      <div className="z-10 flex justify-end pt-[5px] pr-[6px] [grid-area:1/1]">
        {viewButtons.map(([label, drawing]) => (
          <button key={label} type="button" aria-label={label} className="flex h-6 w-[25px] items-center justify-center">
            <svg viewBox="0 0 60 60" className="size-5 overflow-visible" fill="none" strokeWidth="3" aria-hidden="true">{drawing}</svg>
          </button>
        ))}
      </div>
    </div>
  );
}

function TitleBar() {
  return (
    <header className="flex h-6 shrink-0 items-center bg-white pr-px pl-1">
      <svg width="12" height="14" viewBox="0 0 36 42" aria-hidden="true">
        <path d="M0 5L11 8L13 32Z" fill="#3b5166" /><path d="M12 8L34 0L15 38Z" fill="#1e3c66" /><path d="M11 7L12 30L33 1Z" fill="#274f86" />
      </svg>
      <h1 className="ml-[7px] text-[11px] leading-4">VCarve Pro Trial Edition 9.010 - [New]</h1>
      <div className="ml-auto flex text-black">
        <button type="button" aria-label="Minimize" className="flex h-6 w-[46px] items-center justify-center"><svg width="10" height="10" stroke="currentColor"><path d="M0 5.500H10" /></svg></button>
        <button type="button" aria-label="Restore" className="flex h-6 w-[45px] items-center justify-center"><svg width="10" height="10" stroke="currentColor" fill="none"><path d="M0.500 2.500H7.500V9.500H0.500ZM2.500 2V0.500H9.500V7.500H8" /></svg></button>
        <button type="button" aria-label="Close" className="mb-1 flex h-6 w-[48px] items-center justify-center"><svg width="11" height="11" stroke="currentColor"><path d="M0.500 0.500L10.500 10.500M10.500 0.500L0.500 10.500" /></svg></button>
      </div>
    </header>
  );
}

const menus: [string, string][] = [
  ["File", "w-[34px]"], ["Edit", "w-9"], ["Model", "w-[50px]"], ["Toolpaths", "w-[69px]"], ["View", "w-[41px]"], ["Gadgets", "w-[59px]"], ["Help", "w-10"],
];

function MenuBar() {
  return (
    <nav className="flex h-6 shrink-0 items-center bg-gradient-to-r from-[#f0f0f0] to-[#fbfbfb] pl-3">
      {menus.map(([label, width]) => (
        <button key={label} type="button" className={"text-left text-[12px] leading-4 whitespace-nowrap " + width}>{label}</button>
      ))}
      <div className="mb-[3px] ml-auto flex items-center gap-2 pr-[7px]">
        <button type="button" aria-label="Minimize document"><svg width="8" height="9"><path d="M0 8H7" stroke="#111" strokeWidth="2" /></svg></button>
        <button type="button" aria-label="Restore document"><svg width="9" height="9" fill="none" stroke="#111"><path d="M0.500 4.500H6.500V8.500H0.500ZM2.500 4V1.500H8.500V5.500H7M0 4H7M2 1H9" /></svg></button>
        <button type="button" aria-label="Close document"><svg width="8" height="9"><path d="M1 1L7 8M7 1L1 8" stroke="#111" strokeWidth="2" /></svg></button>
      </div>
    </nav>
  );
}

export default function App() {
  return (
    <div className="flex h-screen flex-col overflow-hidden bg-[#f0f0f0] font-['Open_Sans','Noto_Sans',sans-serif] text-[#0a0a0a]">
      <TitleBar />
      <MenuBar />
      <div className="flex min-h-0 grow">
        <Sidebar />
        <main className="ml-1 flex min-w-0 grow flex-col">
          <Toolbar />
          <Viewport />
        </main>
        <div className="flex w-[22px] shrink-0 flex-col items-end bg-[#fafafa] pt-[2px]">
          <button type="button" className="flex h-[66px] w-5 items-center justify-center border border-r-0 border-[#8d8d8d] bg-[#fcfcfc] text-[11px] leading-4">
            <span className="[writing-mode:vertical-rl]">Toolpaths</span>
          </button>
        </div>
      </div>
      <footer className="flex h-[19px] shrink-0 border-t border-[#d9d9d9] text-[12px]">
        <span className="w-[72%] pl-[2px] leading-5">Ready</span>
        <span className="border-l border-[#d5d5d5]" />
      </footer>
    </div>
  );
}
